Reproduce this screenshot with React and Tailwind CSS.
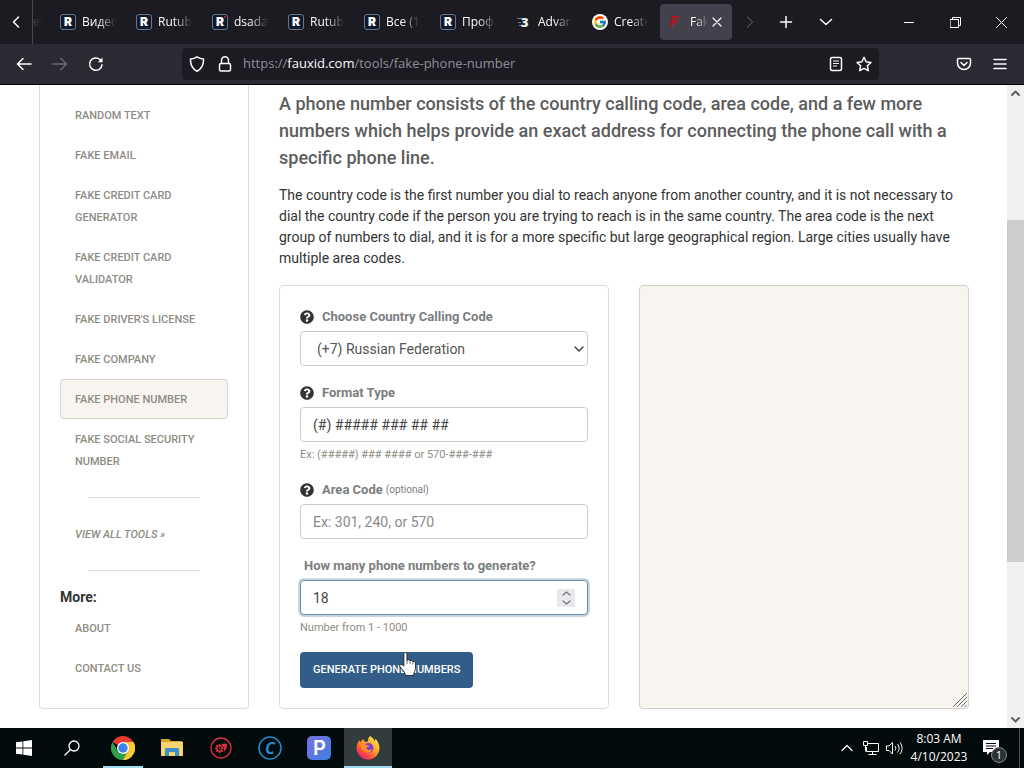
import { useState } from 'react';
import { FaQuestionCircle } from 'react-icons/fa';
import { FcGoogle } from 'react-icons/fc';

const tabs = [
  { icon: 'rutube', title: 'Видео' },
  { icon: 'rutube', title: 'Rutub' },
  { icon: 'rutube', title: 'dsada', dot: true },
  { icon: 'rutube', title: 'Rutub' },
  { icon: 'rutube', title: 'Все (1' },
  { icon: 'rutube', title: 'Проф' },
  { icon: 'three', title: 'Advan' },
  { icon: 'google', title: 'Create' }
];

const tools = [
  'Random Text',
  'Fake Email',
  'Fake Credit Card Generator',
  'Fake Credit Card Validator',
  "Fake Driver's License",
  'Fake Company',
  'Fake Phone Number',
  'Fake Social Security Number'
];

const inputClass = 'block w-full h-[35px] px-3 border border-[#ccc] rounded bg-white text-sm text-[#444] placeholder:text-[#8a8a8a] outline-none';

const Line = ({ size = 16, d, width = 1.5, box = 16, className }) => (
  <svg
    width={size}
    height={size}
    viewBox={`0 0 ${box} ${box}`}
    fill="none"
    stroke="currentColor"
    strokeWidth={width}
    strokeLinecap="round"
    strokeLinejoin="round"
    className={className}
    aria-hidden="true"
  >
    <path d={d} />
  </svg>
);

const Favicon = ({ type, dot }) => {
  if (type === 'google') {
    return (
      <span className="w-4 h-4 shrink-0 rounded-full bg-white flex items-center justify-center">
        <FcGoogle size={14} />
      </span>
    );
  }
  if (type === 'three') {
    return (
      <svg width="16" height="16" viewBox="0 0 16 16" className="shrink-0" aria-hidden="true">
        <path d="M1 4.500h5M2 8.500h3M3 11.500h3" stroke="#6a7c86" />
        <text x="5" y="12.500" fontFamily="Open Sans" fontSize="13" fontWeight="800" fill="#e3eeee">3</text>
      </svg>
    );
  }
  return (
    <svg width="16" height="16" viewBox="0 0 16 16" className="shrink-0" aria-hidden="true">
      <rect x="0.5" y="0.5" width="15" height="15" rx="2.5" fill="#10192b" stroke="#66778a" />
      <text x="8" y="12" textAnchor="middle" fontFamily="Inter" fontSize="12" fontWeight="900" fill="#fff">R</text>
      {dot && <circle cx="13" cy="3" r="1" fill="#c22b3c" />}
    </svg>
  );
};

const TabBar = () => (
  <div className="h-11 shrink-0 bg-[#1c1b22] flex items-center text-[#fbfbfe] text-xs">
    <button aria-label="Scroll tabs left" className="w-8 h-full flex items-center justify-center">
      <Line d="M10.5 3 5.5 8l5 5" />
    </button>
    <div className="w-5 h-full border-l border-[#4a4a52] flex items-center text-[#44434b]">
      <span className="[mask-image:linear-gradient(to_right,black,transparent)]">el</span>
    </div>
    {tabs.map((tab, i) => (
      <button key={i} className="w-[76px] h-9 pl-2 shrink-0 flex items-center gap-[6px]">
        <Favicon type={tab.icon} dot={tab.dot} />
        <span className="w-10 whitespace-nowrap text-left [mask-image:linear-gradient(to_right,black_40%,transparent_85%)]">
          {tab.title}
        </span>
      </button>
    ))}
    <div className="w-[72px] h-9 pl-2 shrink-0 rounded bg-[#42414d] flex items-center gap-[6px]">
      <svg width="16" height="16" viewBox="0 0 16 16" className="shrink-0" aria-hidden="true">
        <text x="2" y="13" fontFamily="Inter" fontSize="14" fontWeight="900" fontStyle="italic" fill="#b5161b">F</text>
      </svg>
      <span className="w-5 whitespace-nowrap [mask-image:linear-gradient(to_right,black_30%,transparent_90%)]">Fak</span>
      <button aria-label="Close tab" className="-ml-1"><Line size={10} box={10} d="M1 1l8 8M9 1 1 9" width={1.2} /></button>
    </div>
    <button aria-label="Scroll tabs right" className="w-9 h-9 flex items-center justify-center text-[#4d4c55]">
      <Line d="m5.500 3 5 5-5 5" width={1.2} />
    </button>
    <button aria-label="New tab" className="w-9 h-9 flex items-center justify-center">
      <Line d="M8 2.500v11M2.500 8h11" />
    </button>
    <button aria-label="List all tabs" className="w-11 h-9 flex items-center justify-center">
      <Line d="m2.500 5.500 5.500 5 5.500-5" />
    </button>
    <div className="ml-auto flex h-full">
      <button aria-label="Minimize" className="w-[46px] flex items-center justify-center">
        <Line size={10} box={10} d="M0 5.500h10" width={1} />
      </button>
      <button aria-label="Restore" className="w-[46px] flex items-center justify-center">
        <Line size={11} box={11} d="M.5 2.500h8v8h-8zM2.500 2.500v-2h8v8h-2" width={1} />
      </button>
      <button aria-label="Close" className="w-[46px] flex items-center justify-center">
        <Line size={11} box={11} d="m.5.5 10 10M10.500.5l-10 10" width={1} />
      </button>
    </div>
  </div>
);

const Toolbar = () => (
  <div className="h-[41px] px-[6px] shrink-0 bg-[#2b2a33] border-b border-black flex items-center text-[#fbfbfe]">
    <button aria-label="Back" className="w-9 h-8 flex items-center justify-center">
      <Line d="M15 8H1.500M7 2.500 1.500 8 7 13.500" />
    </button>
    <button aria-label="Forward" className="w-9 h-8 flex items-center justify-center text-[#6b6a73]">
      <Line d="M1 8h13.500M9 2.500 14.500 8 9 13.500" />
    </button>
    <button aria-label="Reload" className="w-9 h-8 flex items-center justify-center">
      <svg width="16" height="16" viewBox="0 0 16 16" fill="none" stroke="currentColor" strokeWidth="1.500" strokeLinecap="round" aria-hidden="true">
        <path d="M14 8.800A6.200 6.200 0 1 1 12 3.500l1.500 1.500" />
        <path d="M14.500 1.500v4.700H9.800z" fill="currentColor" stroke="none" />
      </svg>
    </button>
    <div className="grow min-w-0 h-8 ml-[68px] mr-[67px] px-[7px] rounded bg-[#1c1b22] flex items-center">
      <Line d="M8 .8c2 1.400 4.300 2 6.500 2.200C14.700 8.500 12.700 13 8 15.200 3.300 13 1.300 8.500 1.500 3 3.700 2.800 6 2.200 8 .8z" className="shrink-0" />
      <svg width="16" height="16" viewBox="0 0 16 16" fill="none" stroke="currentColor" strokeWidth="1.500" className="ml-3 shrink-0" aria-hidden="true">
        <rect x="2.500" y="7.500" width="11" height="7.500" rx="1.500" />
        <path d="M4.500 7.500V4.300a3.500 3.500 0 0 1 7 0v3.200" />
      </svg>
      <div className="grow min-w-0 ml-[10px] text-[13px] text-[#8f8f98] truncate">
        https://<span className="text-[#fbfbfe]">fauxid.com</span>/tools/fake-phone-number
      </div>
      <button aria-label="Reader view" className="shrink-0">
        <svg width="16" height="16" viewBox="0 0 16 16" fill="none" stroke="currentColor" strokeWidth="1.500" aria-hidden="true">
          <rect x="2.500" y="1.500" width="11" height="13" rx="1.500" />
          <path d="M5 5h6M5 7.500h6M5 10h4" strokeWidth="1.200" />
        </svg>
      </button>
      <button aria-label="Bookmark this page" className="ml-3 shrink-0">
        <Line d="m8 1.200 2.100 4.500 4.900.7-3.600 3.400.9 4.900L8 12.400l-4.300 2.300.9-4.900L1 6.400l4.900-.7z" />
      </button>
    </div>
    <button aria-label="Save to Pocket" className="w-9 h-8 flex items-center justify-center">
      <Line d="M2.500 2.500h11c.6 0 1 .4 1 1V7a6.500 6.500 0 0 1-13 0V3.500c0-.6.4-1 1-1zM5 6.500l3 3 3-3" />
    </button>
    <button aria-label="Open menu" className="w-9 h-8 flex items-center justify-center">
      <Line d="M2 3.500h12M2 8h12M2 12.500h12" />
    </button>
  </div>
);

const NavItem = ({ label, active }) => (
  <li>
    <a
      href="#"
      className={`block px-[14px] pt-[9px] pb-[7px] border rounded text-[11px] leading-[22px] font-medium uppercase text-[#8e8c84] ${active ? 'bg-[#f8f5f0] border-[#d8d3ca]' : 'border-transparent'}`}
    >
      {label}
    </a>
  </li>
);

const Sidebar = () => (
  <aside className="w-[210px] shrink-0 border border-t-0 border-[#dcdcdc] rounded-b px-5 pt-[10px] pb-5">
    <ul>
      {tools.map((tool) => (
        <NavItem key={tool} label={tool} active={tool === 'Fake Phone Number'} />
      ))}
    </ul>
    <hr className="mx-7 my-4 border-[#dcdcdc]" />
    <ul className="italic">
      <NavItem label="View all tools »" />
    </ul>
    <hr className="mx-7 my-4 border-[#dcdcdc]" />
    <h2 className="text-sm leading-[21px] font-bold text-[#333]">More:</h2>
    <ul>
      <NavItem label="About" />
      <NavItem label="Contact Us" />
    </ul>
  </aside>
);

const FieldLabel = ({ htmlFor, children, note }) => (
  <label htmlFor={htmlFor} className="flex items-center mb-[3px] text-[13px] leading-[22px] font-bold text-[#7b7e80]">
    <FaQuestionCircle size={14} className="mr-2 text-[#333]" />
    {children}
    {note && <small className="ml-[3px] text-[10px] font-normal">{note}</small>}
  </label>
);

const HandCursor = () => (
  <svg width="19" height="25" viewBox="0 0 17 24" className="absolute left-[98px] top-0" aria-hidden="true">
    <path
      d="M5 2c0-2 3-2 3 0v6c1-1 2.700-.6 3 .6 1-.8 2.500-.3 2.700.8 1.200-.6 2.500.1 2.500 1.600v5c0 2-1.700 3-1.700 6.500h-8C6.500 20 4 17.500 1.200 14c-1-1.500.8-3 2.200-1.800L5 13.500z"
      fill="#fff"
      stroke="#111"
      strokeWidth=".8"
    />
    <path d="M8 8v3.500M11 9v2.500M13.700 10v2" stroke="#111" strokeWidth=".6" />
  </svg>
);

const PhoneForm = () => {
  const [country, setCountry] = useState('7');
  const [format, setFormat] = useState('(#) ##### ### ## ##');
  const [areaCode, setAreaCode] = useState('');
  const [count, setCount] = useState(18);

  return (
    <form onSubmit={(e) => e.preventDefault()} className="min-w-0 p-5 border border-[#dcdcdc] rounded">
      <div className="mb-4">
        <FieldLabel htmlFor="country">Choose Country Calling Code</FieldLabel>
        <div className="relative">
          <select
            id="country"
            value={country}
            onChange={(e) => setCountry(e.target.value)}
            className="block w-full h-[35px] pl-4 pr-6 border border-[#ccc] rounded bg-white text-sm text-[#555] appearance-none outline-none"
          >
            <option value="7">(+7) Russian Federation</option>
            <option value="1">(+1) United States</option>
          </select>
          <Line size={10} box={10} d="m1 3 4 4 4-4" className="absolute right-1 top-[13px] text-[#444] pointer-events-none" />
        </div>
      </div>

      <div className="mb-4">
        <FieldLabel htmlFor="format">Format Type</FieldLabel>
        <input id="format" type="text" value={format} onChange={(e) => setFormat(e.target.value)} className={inputClass} />
        <p className="mt-[5px] text-[11px] leading-4 text-[#8e8c84]">Ex: (#####) ### #### or 570-###-###</p>
      </div>

      <div className="mb-4">
        <FieldLabel htmlFor="area" note="(optional)">Area Code</FieldLabel>
        <input
          id="area"
          type="text"
          value={areaCode}
          onChange={(e) => setAreaCode(e.target.value)}
          placeholder="Ex: 301, 240, or 570"
          className={inputClass}
        />
      </div>

      <div className="mb-4">
        <label htmlFor="count" className="block mb-[3px] pl-1 text-[13px] leading-[22px] font-bold text-[#7b7e80]">
          How many phone numbers to generate?
        </label>
        <div className="h-[35px] pl-3 pr-3 border border-[#6d8fae] rounded bg-white flex items-center ring-2 ring-[#c9d5e0]">
          <input
            id="count"
            type="number"
            min="1"
            max="1000"
            value={count}
            onChange={(e) => setCount(e.target.value)}
            className="grow min-w-0 text-sm text-[#444] outline-none [appearance:textfield]"
          />
          <div className="w-[18px] h-[18px] bg-[#e9e9ed] text-[#777] flex flex-col items-center justify-between">
            <button type="button" aria-label="Increase" onClick={() => setCount(Number(count) + 1)}>
              <Line size={9} box={9} d="m1 6 3.500-3L8 6" width={1.3} className="block" />
            </button>
            <button type="button" aria-label="Decrease" onClick={() => setCount(Number(count) - 1)}>
              <Line size={9} box={9} d="m1 3 3.500 3L8 3" width={1.3} className="block" />
            </button>
          </div>
        </div>
        <p className="mt-[5px] text-[11px] leading-4 text-[#8e8c84]">Number from 1 - 1000</p>
      </div>

      <button type="submit" className="relative block h-9 px-[13px] rounded bg-[#325d88] text-[11px] font-medium text-white uppercase whitespace-nowrap">
        Generate phone numbers
        <HandCursor />
      </button>
    </form>
  );
};

const Scrollbar = () => (
  <div className="w-[17px] shrink-0 bg-[#f0f0f0] text-[#606060] flex flex-col">
    <div className="h-[17px] flex items-center justify-center">
      <Line size={9} box={9} d="m1 6 3.500-3.500L8 6" width={2} />
    </div>
    <div className="grow-[118]" />
    <div className="grow-[342] bg-[#cdcdcd]" />
    <div className="grow-[149]" />
    <div className="h-[17px] flex items-center justify-center">
      <Line size={9} box={9} d="m1 3 3.500 3.500L8 3" width={2} />
    </div>
  </div>
);

const ChromeIcon = () => (
  <svg width="24" height="24" viewBox="0 0 24 24" aria-hidden="true">
    <path d="M12 12 1.600 6A12 12 0 0 1 22.400 6z" fill="#e33b2e" />
    <path d="M12 12 22.400 6A12 12 0 0 1 12 24z" fill="#fcc934" />
    <path d="M12 6h10.400A12 12 0 0 1 12 24l5.200-9z" fill="#fcc934" />
    <path d="M12 24A12 12 0 0 1 1.600 6l5.200 9A6 6 0 0 0 17.200 15z" fill="#2da14c" />
    <circle cx="12" cy="12" r="6" fill="#fff" />
    <circle cx="12" cy="12" r="4.700" fill="#3b82e8" />
  </svg>
);

const ExplorerIcon = () => (
  <svg width="22" height="20" viewBox="0 0 22 20" aria-hidden="true">
    <path d="M0 1h8l2 2h11v4H0z" fill="#d9a22f" />
    <path d="M0 4h22v14H0z" fill="#f6d472" />
    <path d="M4 18v-6.500c0-.8.7-1.500 1.500-1.500h11c.8 0 1.500.7 1.500 1.500V18h-4v-4H8v4z" fill="#3f8fc9" />
  </svg>
);

const FirefoxIcon = () => (
  <svg width="24" height="24" viewBox="0 0 24 24" aria-hidden="true">
    <defs>
      <linearGradient id="fox" x1="0.85" y1="0.1" x2="0.2" y2="0.95">
        <stop offset="0" stopColor="#ffe145" />
        <stop offset="0.45" stopColor="#ff9a27" />
        <stop offset="0.75" stopColor="#ff4a3c" />
        <stop offset="1" stopColor="#e0218a" />
      </linearGradient>
    </defs>
    <path d="M14 0c3 1.500 4 3.500 4.500 5 .8-.2.8-1.500.6-2.500C22 5 23.500 8.500 23.500 12A11.500 11.500 0 1 1 .5 12c0-3 1-5.500 3-8 .1 1 .4 1.600 1 2 1-1.700 2-2.500 3.200-3-.2 1.200.2 2 .9 2.600 1.200-.2 2.300 0 3.200.5C11.700 4 12.500 1.500 14 0z" fill="url(#fox)" />
    <circle cx="12.500" cy="12" r="5" fill="#7b3fd1" />
    <path d="M4.500 8c2.500-1 4.500-.5 6 1 1 .3 2 .4 3 .2-.4 1.300-1.700 1.700-2.800 2-.6 1 .1 2.800 2.300 2.800 1.500 0 2-.8 3.300-.4-1 2.500-3.500 3.700-6 3C6.500 15.500 5 12 4.500 8z" fill="#ff8b23" />
  </svg>
);

const RedGearIcon = () => (
  <svg width="22" height="22" viewBox="0 0 22 22" fill="none" stroke="#e0303a" aria-hidden="true">
    <circle cx="11" cy="11" r="10" strokeWidth="1.300" />
    <circle cx="9.500" cy="11.500" r="2.700" strokeWidth="1.400" />
    <circle cx="9.500" cy="11.500" r=".8" fill="#e0303a" stroke="none" />
    <path d="M9.500 7v1.500M9.500 14.500V16M5 11.500h1.500M6.300 8.300l1 1M6.300 14.700l1-1M11.700 13.700l1 1" strokeWidth="1.600" />
    <path d="M11.500 7c2-.8 4.300-.8 5.500 0 .5 3-1 6-3.200 8 .5-1.700.4-2.700-.6-3.700l1.300-1.800c-.8.2-1.500.2-2-.2z" fill="#e0303a" stroke="none" />
  </svg>
);

const WindowsIcon = () => (
  <svg width="16" height="16" viewBox="0 0 16 16" fill="#fff" aria-hidden="true">
    <path d="M0 2.300 6.500 1.400v6.200H0zM7.300 1.300 16 0v7.600H7.300zM0 8.400h6.500v6.200L0 13.700zM7.300 8.400H16V16l-8.700-1.200z" />
  </svg>
);

const apps = [
  { name: 'Chrome', icon: <ChromeIcon />, running: true },
  { name: 'File Explorer', icon: <ExplorerIcon /> },
  { name: 'IObit', icon: <RedGearIcon /> },
  {
    name: 'CCleaner',
    icon: (
      <svg width="24" height="24" viewBox="0 0 24 24" aria-hidden="true">
        <circle cx="12" cy="12" r="11" fill="none" stroke="#2389cf" strokeWidth="1.500" />
        <text x="12" y="17.500" textAnchor="middle" fontFamily="Open Sans" fontSize="16" fontWeight="700" fontStyle="italic" fill="#2389cf">C</text>
      </svg>
    )
  },
  {
    name: 'PicPick',
    icon: (
      <svg width="24" height="24" viewBox="0 0 24 24" aria-hidden="true">
        <defs>
          <linearGradient id="pbg" x1="0" y1="0" x2="1" y2="1">
            <stop offset="0" stopColor="#7b6fe0" />
            <stop offset="1" stopColor="#3c7fe0" />
          </linearGradient>
        </defs>
        <rect width="24" height="24" rx="5" fill="url(#pbg)" />
        <text x="12.500" y="19" textAnchor="middle" fontFamily="Inter" fontSize="20" fontWeight="600" fill="#fff">P</text>
      </svg>
    )
  },
  { name: 'Firefox', icon: <FirefoxIcon />, active: true }
];

const Taskbar = () => (
  <footer className="h-10 shrink-0 bg-[#020b0c] flex text-white">
    <button aria-label="Start" className="w-12 flex items-center justify-center"><WindowsIcon /></button>
    <button aria-label="Search" className="w-12 flex items-center justify-center">
      <svg width="16" height="16" viewBox="0 0 16 16" fill="none" stroke="#fff" strokeWidth="1.300" aria-hidden="true">
        <circle cx="10" cy="6" r="5" />
        <path d="M6.500 9.500.5 15.500" />
      </svg>
    </button>
    <div className="ml-[3px] flex gap-px">
      {apps.map((app) => (
        <button
          key={app.name}
          aria-label={app.name}
          className={`relative w-12 flex items-center justify-center ${app.active ? 'bg-[#333c3d]' : ''}`}
        >
          {app.icon}
          {app.running && <span className="absolute bottom-0 inset-x-1 h-[2px] bg-[#9fdcf0]" />}
          {app.active && <span className="absolute bottom-0 inset-x-0 h-[2px] bg-[#9fdcf0]" />}
        </button>
      ))}
    </div>
    <div className="ml-auto flex items-center text-xs">
      <button aria-label="Show hidden icons" className="w-6 flex justify-center">
        <Line size={12} box={12} d="m1 8.500 5-5 5 5" width={1.2} />
      </button>
      <svg width="24" height="16" viewBox="0 0 24 16" fill="none" stroke="#fff" aria-hidden="true">
        <path d="M8.500 3.500h11v8h-12V7M13.500 11.500v3M9.500 14.500h8M4.500 1.500h4v4h-4zM6.500 5.500v6" />
      </svg>
      <svg width="24" height="16" viewBox="0 0 24 16" fill="none" stroke="#fff" aria-hidden="true">
        <path d="M3.500 6v4.500H6L9.500 14V2.500L6 6zM12 6c1 1.500 1 3 0 4.500M14.500 4c2 2.500 2 6 0 8.500M17 2.500c2.700 3.500 2.700 8 0 11.500" />
      </svg>
      <div className="w-16 text-center leading-[18px] whitespace-nowrap">
        <div>8:03 AM</div>
        <div>4/10/2023</div>
      </div>
      <button aria-label="Notifications" className="relative w-10 mr-2 h-full flex items-center justify-center">
        <svg width="16" height="16" viewBox="0 0 16 16" aria-hidden="true">
          <path d="M0 0h16v12H7l-3 3v-3H0z" fill="#fff" />
          <path d="M3 3.500h10M3 6h10M3 8.500h7" stroke="#020b0c" />
        </svg>
        <span className="absolute left-5 top-[19px] w-4 h-4 rounded-full border border-[#888] bg-[#2b3234] text-[11px] leading-[14px] text-center">1</span>
      </button>
      <div className="h-full w-[5px] border-l border-[#4a5253]" />
    </div>
  </footer>
);

const App = () => {
  const [result, setResult] = useState('');

  return (
    <div className="h-screen flex flex-col overflow-hidden bg-white font-['Open_Sans',sans-serif]">
      <TabBar />
      <Toolbar />
      <div className="flex grow min-h-0">
        <div className="grow min-w-0 overflow-hidden pl-[39px] pr-[38px] flex items-start gap-[30px] font-['Roboto',sans-serif] text-[#3e3f3a]">
          <Sidebar />
          <main className="grow min-w-0 pt-[5px]">
            <h1 className="mb-[14px] text-lg leading-[27px] font-medium text-[#5c5c5c]">
              A phone number consists of the country calling code, area code, and a few more numbers which helps
              provide an exact address for connecting the phone call with a specific phone line.
            </h1>
            <p className="mb-4 text-sm leading-[21px] text-[#333]">
              The country code is the first number you dial to reach anyone from another country, and it is not
              necessary to dial the country code if the person you are trying to reach is in the same country. The area
              code is the next group of numbers to dial, and it is for a more specific but large geographical region.
              Large cities usually have multiple area codes.
            </p>
            <div className="grid grid-cols-2 gap-[30px]">
              <PhoneForm />
              <div className="relative flex">
                <textarea
                  aria-label="Generated phone numbers"
                  value={result}
                  onChange={(e) => setResult(e.target.value)}
                  className="w-full p-3 border border-[#d4d0c9] rounded bg-[#f8f5f0] text-sm resize-none outline-none"
                />
                <Line size={14} box={14} d="M.5 13.500l13-13M4.500 13.500l9-9M8.500 13.500l5-5M12 13.500l1.500-1.500" width={1} className="absolute right-[2px] bottom-[2px] text-[#666]" />
              </div>
            </div>
          </main>
        </div>
        <Scrollbar />
      </div>
      <Taskbar />
    </div>
  );
};

export default App;
